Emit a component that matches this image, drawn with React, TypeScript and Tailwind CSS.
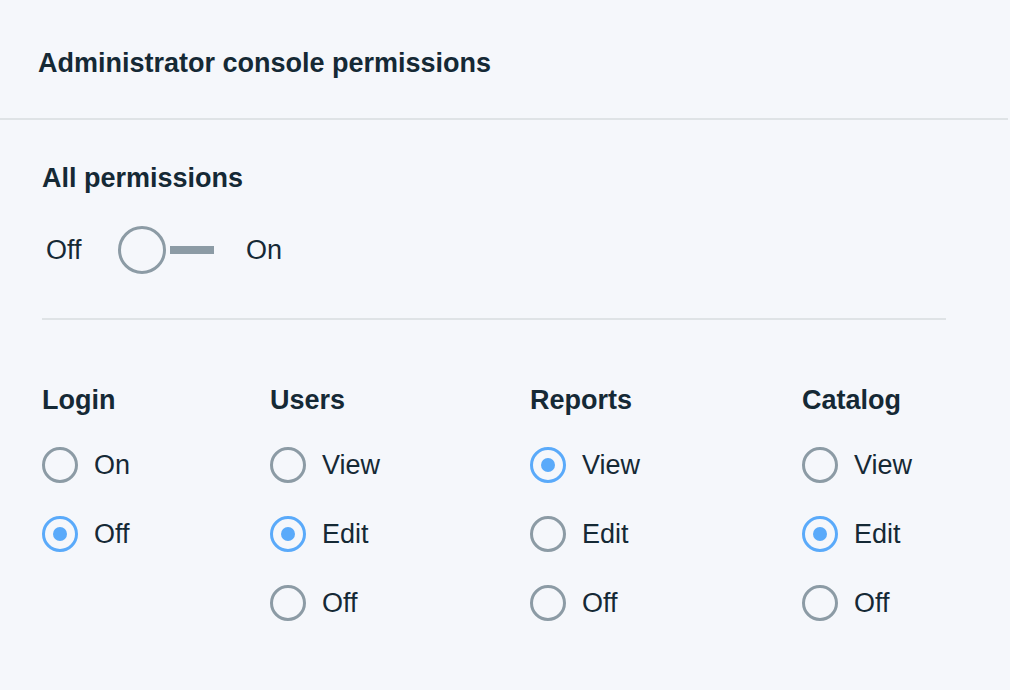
import React from "react";

type Column = {
  title: string;
  width: string;
  options: string[];
  selected: string;
};

const columns: Column[] = [
  { title: "Login", width: "w-[228px]", options: ["On", "Off"], selected: "Off" },
  { title: "Users", width: "w-[260px]", options: ["View", "Edit", "Off"], selected: "Edit" },
  { title: "Reports", width: "w-[272px]", options: ["View", "Edit", "Off"], selected: "View" },
  { title: "Catalog", width: "w-[200px]", options: ["View", "Edit", "Off"], selected: "Edit" },
];

function Radio({ label, checked }: { label: string; checked: boolean }) {
  return (
    <label className="flex h-[36px] items-center gap-[16px]">
      <span
        className={
          checked
            ? "flex h-[36px] w-[36px] items-center justify-center rounded-full border-[3px] border-[#5aaafa]"
            : "flex h-[36px] w-[36px] items-center justify-center rounded-full border-[3px] border-[#8c9ba5]"
        }
      >
        {checked && <span className="h-[14px] w-[14px] rounded-full bg-[#5aaafa]" />}
      </span>
      <span className="text-[27px] leading-[30px]">{label}</span>
    </label>
  );
}

export default function App() {
  return (
    <div
      className="h-[690px] w-[1010px] overflow-hidden bg-[#f5f7fb] text-[#152935]"
      style={{ fontFamily: '"Liberation Sans", Arial, sans-serif' }}
    >
      <div className="w-[1008px] border-b-2 border-[#dfe3e6] pb-[40px] pl-[38px] pt-[48px]">
        <h1 className="text-[27px] font-bold leading-[30px]">
          Administrator console permissions
        </h1>
      </div>

      <div className="pl-[42px] pt-[43px]">
        <h2 className="text-[27px] font-bold leading-[30px]">All permissions</h2>

        <div className="mt-[33px] flex h-[48px] items-center">
          <span className="w-[76px] pl-[4px] text-[27px] leading-[30px]">Off</span>
          <span className="h-[48px] w-[48px] rounded-full border-[3px] border-[#8c9ba5]" />
          <span className="ml-[4px] h-[8px] w-[44px] bg-[#8c9ba5]" />
          <span className="ml-[32px] text-[27px] leading-[30px]">On</span>
        </div>

        <div className="mt-[44px] h-[2px] w-[904px] bg-[#dfe3e6]" />

        <div className="mt-[65px] flex">
          {columns.map((col) => (
            <div key={col.title} className={col.width}>
              <h3 className="text-[27px] font-bold leading-[30px]">{col.title}</h3>
              <div className="mt-[32px] flex flex-col gap-[33px]">
                {col.options.map((opt) => (
                  <Radio key={opt} label={opt} checked={opt === col.selected} />
                ))}
              </div>
            </div>
          ))}
        </div>
      </div>
    </div>
  );
}
